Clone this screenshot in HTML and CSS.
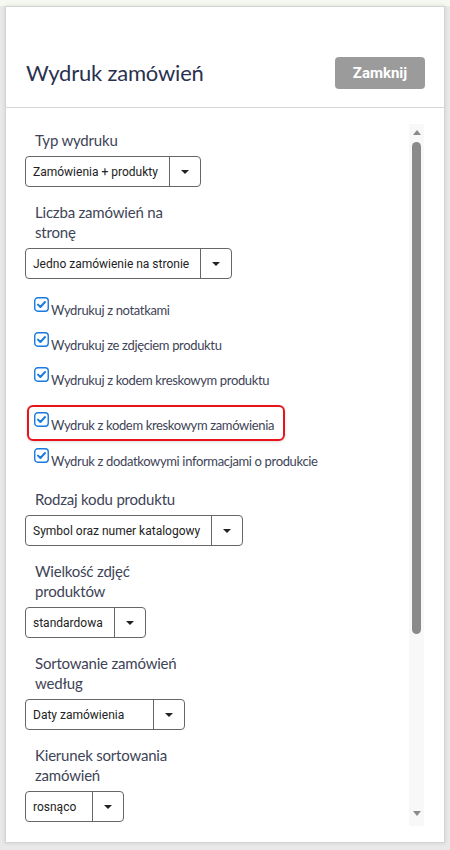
FILE: index.html
```html
<!DOCTYPE html>
<html lang="pl">
<head>
<meta charset="utf-8">
<title>Wydruk zamówień</title>
<link rel="stylesheet" href="styles.css">
</head>
<body>
<div class="topstrip"></div>
<div class="modal">
  <div class="modal-header">
    <h1 class="modal-title">Wydruk zamówień</h1>
    <button class="btn-close">Zamknij</button>
  </div>
  <div class="modal-body">
    <div class="content">
      <div class="group">
        <label class="field-label">Typ wydruku</label>
        <div class="select"><span class="select-text">Zamówienia + produkty</span><span class="select-caret"></span></div>
      </div>
      <div class="group">
        <label class="field-label">Liczba zamówień na stronę</label>
        <div class="select"><span class="select-text">Jedno zamówienie na stronie</span><span class="select-caret"></span></div>
      </div>
      <div class="checks">
        <div class="check-row"><svg class="cb" viewBox="0 0 15 15"><rect x="0.75" y="0.75" width="13.5" height="13.5" rx="3"/><path d="M4 7.6l2.4 2.4 4.6-5"/></svg><span class="check-text">Wydrukuj z notatkami</span></div>
        <div class="check-row"><svg class="cb" viewBox="0 0 15 15"><rect x="0.75" y="0.75" width="13.5" height="13.5" rx="3"/><path d="M4 7.6l2.4 2.4 4.6-5"/></svg><span class="check-text">Wydrukuj ze zdjęciem produktu</span></div>
        <div class="check-row"><svg class="cb" viewBox="0 0 15 15"><rect x="0.75" y="0.75" width="13.5" height="13.5" rx="3"/><path d="M4 7.6l2.4 2.4 4.6-5"/></svg><span class="check-text">Wydrukuj z kodem kreskowym produktu</span></div>
        <div class="check-row highlight"><svg class="cb" viewBox="0 0 15 15"><rect x="0.75" y="0.75" width="13.5" height="13.5" rx="3"/><path d="M4 7.6l2.4 2.4 4.6-5"/></svg><span class="check-text">Wydruk z kodem kreskowym zamówienia</span></div>
        <div class="check-row"><svg class="cb" viewBox="0 0 15 15"><rect x="0.75" y="0.75" width="13.5" height="13.5" rx="3"/><path d="M4 7.6l2.4 2.4 4.6-5"/></svg><span class="check-text">Wydruk z dodatkowymi informacjami o produkcie</span></div>
      </div>
      <div class="group">
        <label class="field-label">Rodzaj kodu produktu</label>
        <div class="select"><span class="select-text">Symbol oraz numer katalogowy</span><span class="select-caret"></span></div>
      </div>
      <div class="group">
        <label class="field-label">Wielkość zdjęć produktów</label>
        <div class="select"><span class="select-text">standardowa</span><span class="select-caret"></span></div>
      </div>
      <div class="group">
        <label class="field-label">Sortowanie zamówień według</label>
        <div class="select"><span class="select-text select-text--sort">Daty zamówienia</span><span class="select-caret"></span></div>
      </div>
      <div class="group">
        <label class="field-label">Kierunek sortowania zamówień</label>
        <div class="select"><span class="select-text select-text--dir">rosnąco</span><span class="select-caret"></span></div>
      </div>
    </div>
    <div class="scrollbar">
      <span class="sb-up"></span>
      <span class="sb-thumb"></span>
      <span class="sb-down"></span>
    </div>
  </div>
</div>
</body>
</html>
```

FILE: styles.css
```css
* { box-sizing: border-box; }
html, body { height: 100%; }
body {
  margin: 0;
  background: #e9e9e9;
  font-family: Lato, "Liberation Sans", sans-serif;
  overflow: hidden;
}
.topstrip {
  height: 6px;
  background: #f5f9ef;
}
.modal {
  margin: 0 5px;
  height: 837px;
  background: #fff;
  border: 1px solid #d4d4d4;
  box-shadow: 0 0 4px rgba(0,0,0,0.12);
  display: flex;
  flex-direction: column;
}
.modal-header {
  display: flex;
  align-items: center;
  justify-content: space-between;
  padding: 50px 19px 18px 20px;
  border-bottom: 1px solid #d6d6d6;
}
.modal-title {
  margin: 0;
  font-weight: 400;
  font-size: 22px;
  letter-spacing: -0.2px;
  line-height: 32px;
  color: #2a3150;
}
.btn-close {
  width: 90px;
  height: 32px;
  border: none;
  border-radius: 4px;
  background: #9b9b9b;
  color: #fff;
  font-family: Roboto, sans-serif;
  font-weight: 700;
  font-size: 15px;
  padding: 0;
}
.modal-body {
  flex: 1;
  display: flex;
  min-height: 0;
}
.content {
  flex: 1;
  overflow: hidden;
  padding: 22px 0 0 19px;
}
.group {
  display: flex;
  flex-direction: column;
  align-items: flex-start;
  margin-bottom: 15px;
}
.field-label {
  display: block;
  max-width: 156px;
  margin-left: 10px;
  font-size: 15px;
  letter-spacing: -0.2px;
  line-height: 20px;
  color: #3e4457;
  margin-bottom: 6px;
}
.select {
  display: inline-flex;
  height: 31px;
  border: 1px solid #666;
  border-radius: 4px;
  font-family: Roboto, sans-serif;
  font-size: 12px;
  color: #222;
}
.select-text {
  display: flex;
  align-items: center;
  padding: 0 11px 0 7px;
  border-right: 1px solid #666;
}
.select-text--sort { min-width: 128px; }
.select-text--dir { min-width: 67px; }
.select-caret {
  width: 30px;
  display: flex;
  align-items: center;
  justify-content: center;
}
.select-caret::before {
  content: "";
  border-left: 4px solid transparent;
  border-right: 4px solid transparent;
  border-top: 4px solid #222;
}
.checks {
  display: flex;
  flex-direction: column;
  align-items: flex-start;
  gap: 12px;
  padding: 3px 0 0 9px;
  margin-bottom: 18px;
}
.check-row {
  display: flex;
  align-items: flex-start;
}
.cb {
  width: 15px;
  height: 15px;
  flex: none;
  fill: none;
  stroke: #1a7ae0;
}
.cb rect { stroke-width: 1.4; }
.cb path { stroke-width: 2; stroke-linecap: round; stroke-linejoin: round; }
.check-text {
  margin: 3px 0 0 2px;
  font-size: 13px;
  letter-spacing: -0.35px;
  line-height: 20px;
  color: #3e4457;
}
.highlight {
  margin: 3px 0 -5px -7px;
  padding: 5px 9px 4px 5px;
  border: 2px solid #e8131b;
  border-radius: 6px;
  box-shadow: 0 1px 3px rgba(0,0,0,0.15);
}
.scrollbar {
  flex: none;
  width: 15px;
  margin: 16px 20px 16px 0;
  background: #f8f8f8;
  display: flex;
  flex-direction: column;
  align-items: center;
}
.sb-up {
  margin-top: 6px;
  border-left: 4.5px solid transparent;
  border-right: 4.5px solid transparent;
  border-bottom: 5px solid #8a8a8a;
}
.sb-thumb {
  width: 9px;
  height: 492px;
  margin-top: 7px;
  border-radius: 5px;
  background: #8a8a8a;
}
.sb-down {
  margin-top: auto;
  margin-bottom: 10px;
  border-left: 4.5px solid transparent;
  border-right: 4.5px solid transparent;
  border-top: 5px solid #8a8a8a;
}
```
